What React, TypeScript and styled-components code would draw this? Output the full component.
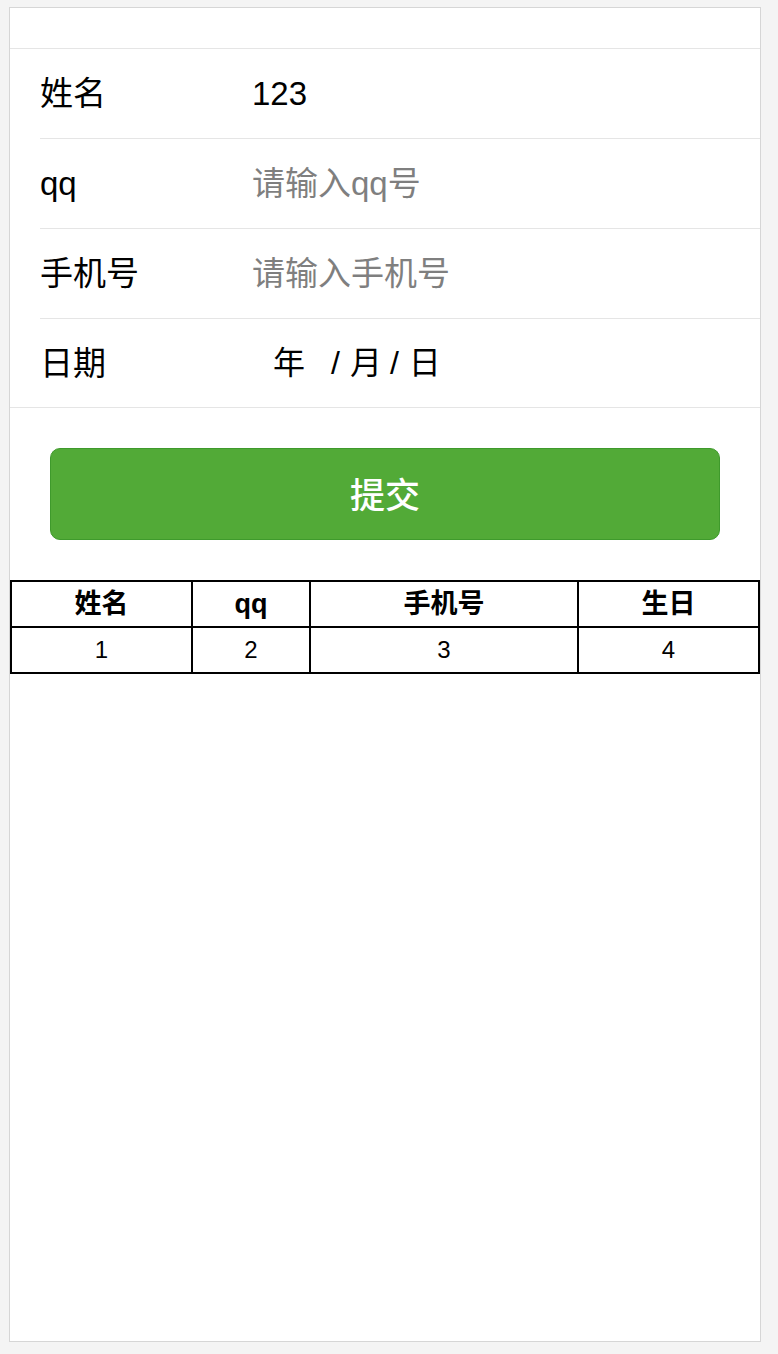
import React from "react";
import styled, { createGlobalStyle } from "styled-components";

const Global = createGlobalStyle`
  html, body {
    margin: 0;
    padding: 0;
    background: #f4f4f4;
  }
  body {
    font-family: "Liberation Sans", "Noto Sans CJK SC", sans-serif;
    color: #000;
  }
`;

const Screen = styled.div`
  box-sizing: border-box;
  margin: 7px 0 0 9px;
  width: 752px;
  height: 1335px;
  background: #fff;
  border: 1px solid #d6d6d6;
  padding-top: 40px;
`;

const Cells = styled.div`
  border-top: 1px solid #e5e5e5;
  border-bottom: 1px solid #e5e5e5;
`;

const Cell = styled.div`
  display: flex;
  align-items: center;
  height: 89px;
  margin-left: 30px;
  border-top: 1px solid #e5e5e5;
  &:first-child {
    border-top: none;
  }
  &:last-child {
    height: 88px;
  }
`;

const Label = styled.div`
  width: 212px;
  flex: none;
  font-size: 33px;
  line-height: 1;
`;

const Value = styled.div<{ $placeholder?: boolean }>`
  font-size: 33px;
  line-height: 1;
  color: ${(p) => (p.$placeholder ? "#7f7f7f" : "#000")};
`;

const DateValue = styled.div`
  display: flex;
  align-items: center;
  padding-left: 21px;
  font-size: 32px;
  line-height: 1;
`;

const DatePart = styled.span<{ $gap: number }>`
  margin-right: ${(p) => p.$gap}px;
`;

const ButtonArea = styled.div`
  padding: 40px 40px;
`;

const SubmitButton = styled.button`
  display: block;
  box-sizing: border-box;
  width: 100%;
  height: 92px;
  padding: 0 0 4px;
  border: 1px solid #3f9a2c;
  border-radius: 10px;
  background: #52aa37;
  color: #fff;
  font-family: "Liberation Sans", "Noto Sans CJK SC", sans-serif;
  font-size: 35px;
  font-weight: 500;
  cursor: pointer;
`;

const Table = styled.table`
  width: 750px;
  border-collapse: collapse;
  table-layout: fixed;
`;

const Th = styled.th<{ $w?: number }>`
  width: ${(p) => (p.$w ? `${p.$w}px` : "auto")};
  height: 44px;
  border: 2px solid #000;
  padding: 0;
  font-size: 27px;
  line-height: 1;
  font-weight: bold;
  text-align: center;
`;

const Td = styled.td`
  height: 44px;
  border: 2px solid #000;
  padding: 0;
  font-size: 24px;
  text-align: center;
`;

const cols: { title: string; w?: number }[] = [
  { title: "姓名", w: 179 },
  { title: "qq", w: 116 },
  { title: "手机号", w: 266 },
  { title: "生日" },
];

export default function App() {
  return (
    <>
      <Global />
      <Screen>
        <Cells>
          <Cell>
            <Label>姓名</Label>
            <Value>123</Value>
          </Cell>
          <Cell>
            <Label>qq</Label>
            <Value $placeholder>请输入qq号</Value>
          </Cell>
          <Cell>
            <Label>手机号</Label>
            <Value $placeholder>请输入手机号</Value>
          </Cell>
          <Cell>
            <Label>日期</Label>
            <DateValue>
              <DatePart $gap={26}>年</DatePart>
              <DatePart $gap={10}>/</DatePart>
              <DatePart $gap={8}>月</DatePart>
              <DatePart $gap={10}>/</DatePart>
              <DatePart $gap={0}>日</DatePart>
            </DateValue>
          </Cell>
        </Cells>
        <ButtonArea>
          <SubmitButton>提交</SubmitButton>
        </ButtonArea>
        <Table>
          <thead>
            <tr>
              {cols.map((c) => (
                <Th key={c.title} $w={c.w}>
                  {c.title}
                </Th>
              ))}
            </tr>
          </thead>
          <tbody>
            <tr>
              <Td>1</Td>
              <Td>2</Td>
              <Td>3</Td>
              <Td>4</Td>
            </tr>
          </tbody>
        </Table>
      </Screen>
    </>
  );
}
